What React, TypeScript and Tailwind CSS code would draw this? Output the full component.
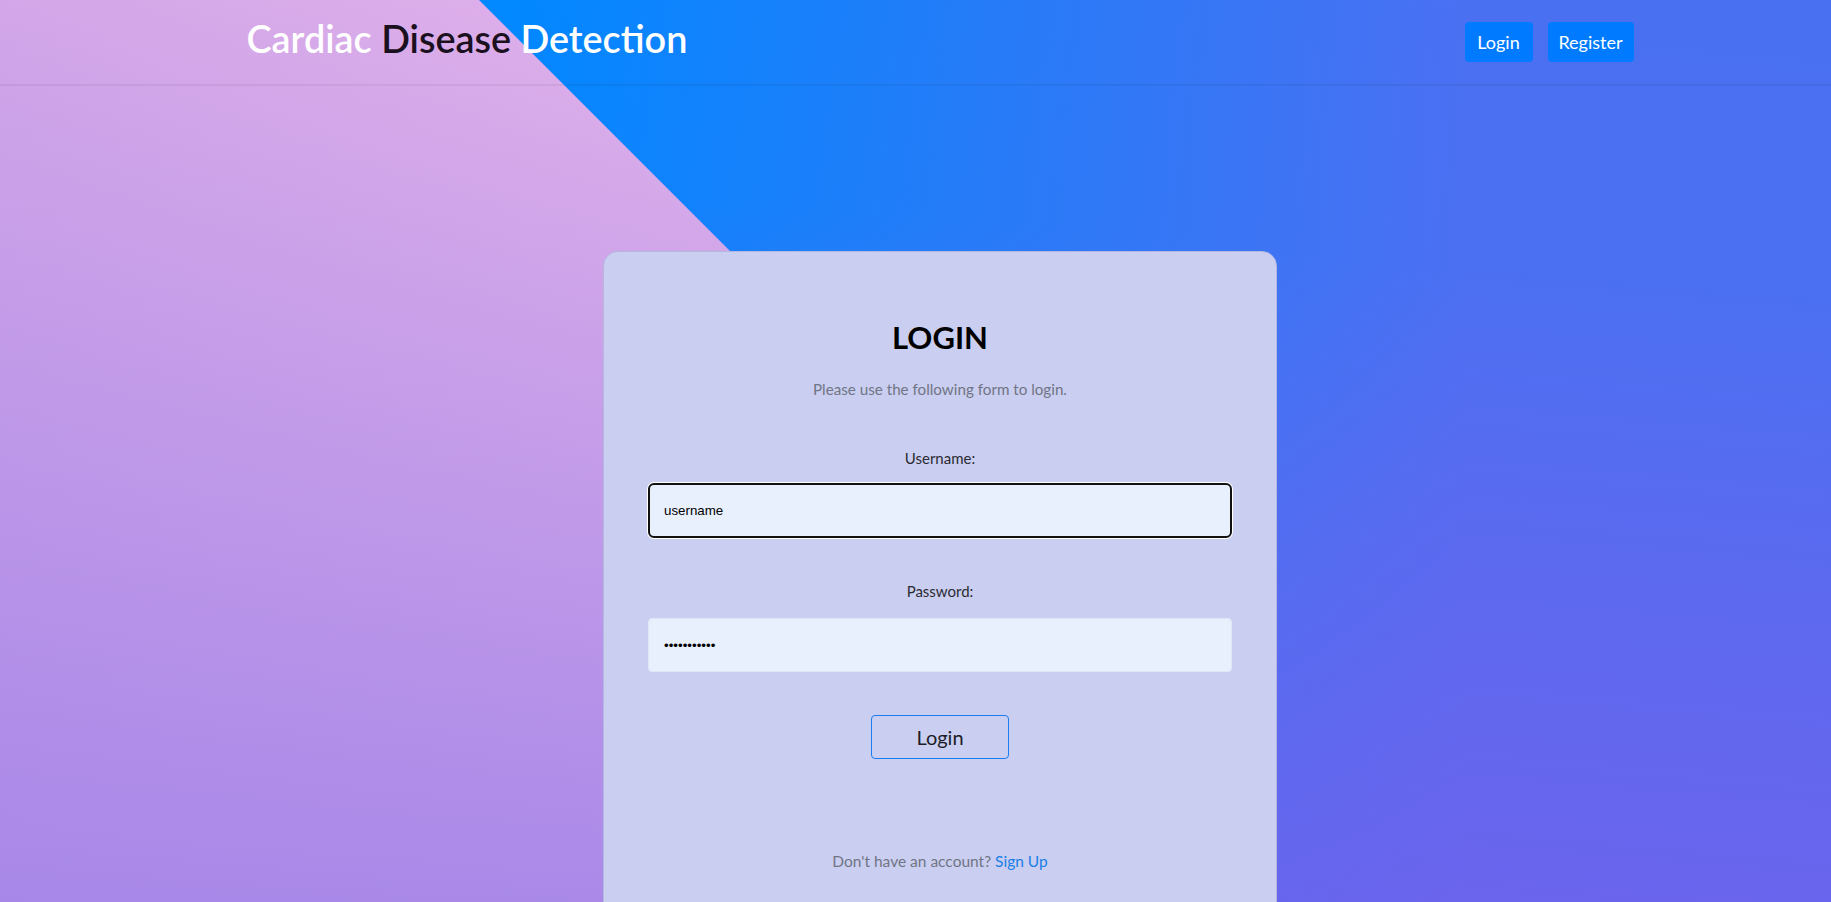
import React from 'react'

const FONT = "font-['Lato','Noto_Sans',sans-serif]"

function Header() {
  return (
    <header className="relative w-full h-[86px] border-b-2 border-black/[0.05]">
      <div className="pl-[49px] h-full">
        <div className="mx-auto w-[1387px] h-full flex items-center justify-between">
          <h1 className="text-[37.8px] font-semibold leading-none -mt-[6px]">
            <span className="text-white">Cardiac </span>
            <span className="text-[#1a1020]">Disease </span>
            <span className="text-white">Detection</span>
          </h1>
          <nav className="flex items-center gap-[15px] mt-0">
            <a className="h-[40px] w-[68px] rounded-[4px] bg-[#007bff] text-white text-[18px] flex items-center justify-center">
              Login
            </a>
            <a className="h-[40px] w-[86px] rounded-[4px] bg-[#007bff] text-white text-[18px] flex items-center justify-center">
              Register
            </a>
          </nav>
        </div>
      </div>
    </header>
  )
}

function LoginCard() {
  return (
    <div className="pl-[49px] pt-[165px]">
      <div className="mx-auto w-[674px] h-[720px] rounded-[15px] border border-[#b4b8e0] bg-[#cacef0] px-[44px] pt-[66px] flex flex-col items-center">
        <h2 className="text-[31px] font-bold text-black leading-[38px]">LOGIN</h2>
        <p className="mt-[22px] text-[15.2px] leading-[22px] text-[#707585]">
          Please use the following form to login.
        </p>

        <label className="mt-[47px] text-[15px] leading-[22px] text-[#2b2b33]">Username:</label>
        <input
          type="text"
          defaultValue="username"
          className="mt-[14px] w-full h-[55px] rounded-[6px] border-2 border-[#111] ring-1 ring-white bg-[#e8f0fe] pl-[14px] text-[13.333px] text-black font-['Liberation_Sans',Arial,sans-serif] outline-none"
        />

        <label className="mt-[42px] text-[15px] leading-[22px] text-[#2b2b33]">Password:</label>
        <input
          type="password"
          defaultValue="passwordabc"
          className="mt-[16px] w-full h-[54px] rounded-[4px] border border-[#dfe6f5] bg-[#e8f0fe] pl-[15px] text-[13.333px] text-black font-['Liberation_Sans',Arial,sans-serif] outline-none"
        />

        <button className="mt-[43px] w-[138px] h-[44px] rounded-[4px] border border-[#1a7cf0] text-[20px] text-[#1c1c28]">
          Login
        </button>

        <p className="mt-[91px] text-[15.5px] leading-[22px] text-[#707585]">
          Don't have an account? <a className="text-[#1a7fe8]">Sign Up</a>
        </p>
      </div>
    </div>
  )
}

export default function App() {
  return (
    <div
      className={`relative h-[902px] w-full overflow-hidden ${FONT} [background-image:linear-gradient(to_bottom,rgba(160,130,232,0)_0%,rgba(160,130,232,0.85)_100%),linear-gradient(to_right,#d2a6e8,#e2b2ea_40%)]`}
    >
      {/* blue wedge to the right of the diagonal */}
      <div className="absolute inset-0 [clip-path:polygon(479px_0,100%_0,100%_100%,1000px_100%,1000px_521px)] [background-image:linear-gradient(185deg,rgba(122,94,234,0)_0%,rgba(122,94,234,0.03)_28%,rgba(122,94,234,0.36)_55%,rgba(122,94,234,0.8)_100%),linear-gradient(to_right,#0088ff_28%,#4a70f2_80%)]" />

      <div className="relative">
        <Header />
        <LoginCard />
      </div>
    </div>
  )
}
